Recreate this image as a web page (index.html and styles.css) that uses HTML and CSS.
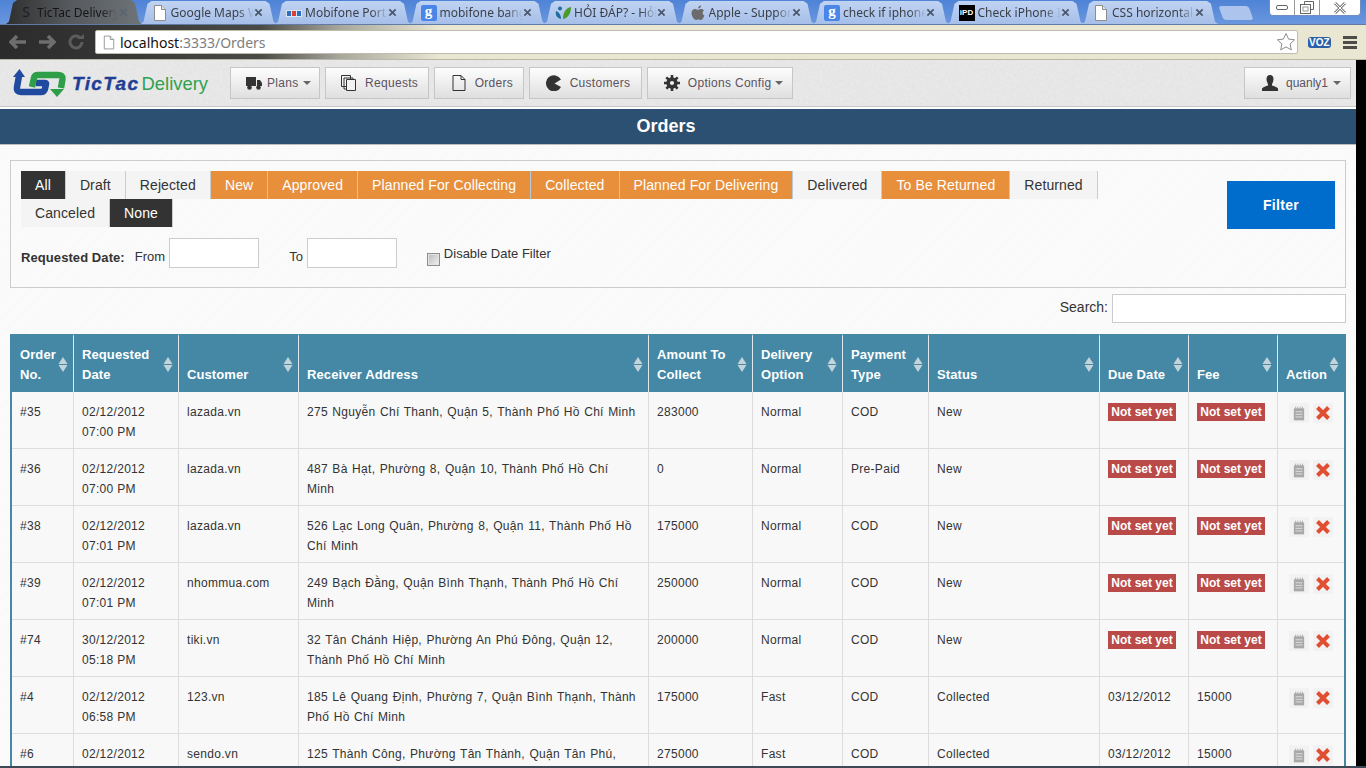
FILE: index.html
```html
<!DOCTYPE html>
<html lang="en">
  <head>
    <meta charset="UTF-8" />
    <meta name="viewport" content="width=device-width, initial-scale=1.0" />
    <title>Orders</title>
    <link rel="stylesheet" href="styles.css">
  </head>
  <body>
    <svg class="defs" width="0" height="0">
      <symbol id="doc" viewBox="0 0 14 16">
        <path d="M1.5 .5h7l4 4v11h-11z" fill="#fff" stroke="#8d8d8d"/>
        <path d="M8.5 .5v4h4" fill="#e4e4e4" stroke="#8d8d8d"/>
      </symbol>
      <symbol id="note" viewBox="0 0 14 16">
        <path d="M1 2h12v14H1z" fill="#a8a8a8"/>
        <path d="M3 0v3M5.500 0v3M8.500 0v3M11 0v3" stroke="#a8a8a8"/>
        <path d="M3 6h8M3 9h8M3 12h8" stroke="#e6e6e6"/>
      </symbol>
      <symbol id="cross" viewBox="0 0 16 16">
        <path d="M2.500 2.500l11 11M13.500 2.500l-11 11" stroke="#e04f32" stroke-width="4"/>
      </symbol>
      <symbol id="close" viewBox="0 0 10 10">
        <path d="M1.500 1.500l7 7M8.500 1.500l-7 7" stroke="#4c5a6e" stroke-width="2"/>
      </symbol>
      <symbol id="updown" viewBox="0 0 10 15">
        <path d="M5 0l4.500 7h-9zM5 15l4.500-7h-9z" fill="#c3d3da"/>
      </symbol>
    </svg>

    <div class="browser">
      <div class="tabstrip">
        <div class="tab tab-active">
          <span class="favicon fav-s">S</span>
          <span class="tab-title">TicTac Delivery</span>
          <svg class="tab-close"><use href="#close"/></svg>
        </div>
        <div class="tab">
          <svg class="favicon"><use href="#doc"/></svg>
          <span class="tab-title">Google Maps Web</span>
          <svg class="tab-close"><use href="#close"/></svg>
        </div>
        <div class="tab">
          <svg class="favicon" viewBox="0 0 16 16">
            <path d="M0 5h16v7H0z" fill="#d9e6f4"/>
            <path d="M1 6h4v5H1z" fill="#2f6fc0"/>
            <path d="M6 6h4v5H6z" fill="#d8413a"/>
            <path d="M11 6h4v5h-4z" fill="#2f6fc0"/>
          </svg>
          <span class="tab-title">Mobifone Portal</span>
          <svg class="tab-close"><use href="#close"/></svg>
        </div>
        <div class="tab">
          <span class="favicon fav-g">g</span>
          <span class="tab-title">mobifone bang gia</span>
          <svg class="tab-close"><use href="#close"/></svg>
        </div>
        <div class="tab">
          <svg class="favicon" viewBox="0 0 16 16">
            <path d="M8 14C8 7 11 3 16 2c0 7-3 11-8 12z" fill="#4c9a2a"/>
            <path d="M6 14C2 13 0 10 1 6c3 1 5 4 5 8z" fill="#1f6f9e"/>
            <circle cx="5" cy="3.500" r="2" fill="#1f6f9e"/>
          </svg>
          <span class="tab-title">HỎI ĐÁP? - Hỏi đáp</span>
          <svg class="tab-close"><use href="#close"/></svg>
        </div>
        <div class="tab">
          <svg class="favicon" viewBox="0 0 16 16">
            <path d="M11 4c1.500 0 2.500.7 3 1.500-2 1.200-1.700 4 .4 4.800C13.600 12.500 12.300 15 11 15c-1 0-1.500-.6-2.700-.6S7 15 6 15c-2 0-4.500-4-4.500-7 0-2.800 1.800-4 3.500-4 1.200 0 2.200.8 3 .8S9.800 4 11 4z" fill="#6b6b6b"/>
            <path d="M8 3.600C8 2 9.300.6 11 .5c.1 1.700-1.300 3.200-3 3.100z" fill="#6b6b6b"/>
          </svg>
          <span class="tab-title">Apple - Support</span>
          <svg class="tab-close"><use href="#close"/></svg>
        </div>
        <div class="tab">
          <span class="favicon fav-g">g</span>
          <span class="tab-title">check if iphone</span>
          <svg class="tab-close"><use href="#close"/></svg>
        </div>
        <div class="tab">
          <span class="favicon fav-ipd">iPD</span>
          <span class="tab-title">Check iPhone IMEI</span>
          <svg class="tab-close"><use href="#close"/></svg>
        </div>
        <div class="tab">
          <svg class="favicon"><use href="#doc"/></svg>
          <span class="tab-title">CSS horizontal menu</span>
          <svg class="tab-close"><use href="#close"/></svg>
        </div>
        <div class="newtab"></div>
        <div class="winctl">
          <span class="winbtn">
            <svg width="12" height="6" viewBox="0 0 12 6"><rect x=".5" y=".5" width="11" height="4" rx="1.500" fill="#fff" stroke="#666"/></svg>
          </span>
          <span class="winbtn">
            <svg width="14" height="13" viewBox="0 0 14 13"><path d="M4.500 3V.5h9v8H11" fill="none" stroke="#666"/><rect x=".5" y="3.500" width="10" height="9" fill="none" stroke="#666"/><rect x="3" y="6" width="5" height="4" fill="none" stroke="#999"/></svg>
          </span>
          <span class="winbtn winbtn-close">
            <svg width="14" height="12" viewBox="0 0 14 12"><path d="M2 1l10 10M12 1L2 11" stroke="#888" stroke-width="3"/><path d="M2 1l10 10M12 1L2 11" stroke="#fff" stroke-width="1"/></svg>
          </span>
        </div>
      </div>
      <div class="toolbar">
        <svg class="toolicon" viewBox="0 0 18 14"><path d="M8 1L2 7l6 6M2 7h15" fill="none" stroke="#6e6e6e" stroke-width="3.500"/></svg>
        <svg class="toolicon" viewBox="0 0 18 14"><path d="M10 1l6 6-6 6M16 7H1" fill="none" stroke="#6e6e6e" stroke-width="3.500"/></svg>
        <svg class="toolicon" viewBox="0 0 18 16"><path d="M15 8a6 6 0 1 1-2-4.500" fill="none" stroke="#5c5c5c" stroke-width="3"/><path d="M10 5h7V0z" fill="#5c5c5c"/></svg>
        <div class="omnibox">
          <svg class="omni-doc"><use href="#doc"/></svg>
          <span class="url">localhost<span class="url-rest">:3333/Orders</span></span>
          <svg class="star" viewBox="0 0 20 20"><path d="M10 1.500l2.600 5.600 6 .7-4.500 4.100 1.200 6-5.300-3-5.300 3 1.200-6L1.400 7.800l6-.7z" fill="#fff" stroke="#8c8c8c"/></svg>
        </div>
        <span class="voz">VOZ</span>
        <span class="burger"><i></i><i></i><i></i></span>
      </div>
    </div>

    <div class="page">
      <div class="content">
        <nav class="topnav">
          <a class="logo" href="#">
            <svg class="logo-mark" viewBox="0 0 60 32">
              <path d="M9 9L7 20q-1 5 4 5h20q3 0 4-3l1-5q.5-1-1-1H26" fill="none" stroke="#1f4aa0" stroke-width="6.500"/>
              <path d="M9.500 2L15 10H3z" fill="#1f4aa0"/>
              <path d="M22 20l2-9q.5-3 4-3h20q5 0 4.500 4L51 21" fill="none" stroke="#2f9e49" stroke-width="6.500"/>
              <path d="M47 30l-7-8h14z" fill="#2f9e49"/>
            </svg>
            <span class="logo-tic">TicTac</span><span class="logo-del">Delivery</span>
          </a>
          <div class="navbtns">
            <a class="navbtn navbtn-plans" href="#">
              <svg class="navicon" viewBox="0 0 16 14"><path d="M0 1h10v9H0zM11 4h3l2 3v3h-5z" fill="#333"/><circle cx="3.500" cy="11.500" r="2.300" fill="#333"/><circle cx="12.500" cy="11.500" r="2.300" fill="#333"/></svg>
              Plans<span class="caret"></span>
            </a>
            <a class="navbtn" href="#">
              <svg class="navicon" viewBox="0 0 16 16"><path d="M.5.500h9v11h-9zM3 3h9v11H3z" fill="#f2f2f2" stroke="#333"/><path d="M5.500 4.500h9v11h-9z" fill="#f2f2f2" stroke="#333"/></svg>
              Requests
            </a>
            <a class="navbtn" href="#">
              <svg class="navicon" viewBox="0 0 14 16"><path d="M1 .5h8l4 4v11H1zM9 .5v4h4" fill="none" stroke="#333"/></svg>
              Orders
            </a>
            <a class="navbtn navbtn-cust" href="#">
              <svg class="navicon" viewBox="0 0 16 16"><path d="M15 4.500A8 8 0 1 0 15 12L8.500 8.500z" fill="#333"/></svg>
              Customers
            </a>
            <a class="navbtn navbtn-opts" href="#">
              <svg class="navicon" viewBox="0 0 16 16"><circle cx="8" cy="8" r="3.900" fill="none" stroke="#333" stroke-width="3.600"/><path d="M8 0v16M0 8h16M2.300 2.300l11.400 11.400M13.700 2.300L2.300 13.700" stroke="#333" stroke-width="2.600" stroke-dasharray="3 10 3 0"/></svg>
              Options Config<span class="caret"></span>
            </a>
          </div>
          <a class="navbtn navbtn-user" href="#">
            <svg class="navicon" viewBox="0 0 16 16"><path d="M8 0c2.500 0 3.500 2 3.500 4S10.500 8.500 10 9v1.500c2 .8 5 1.500 6 3V16H0v-2.500c1-1.500 4-2.200 6-3V9c-.5-.5-1.500-3-1.500-5S5.500 0 8 0z" fill="#333"/></svg>
            quanly1<span class="caret"></span>
          </a>
        </nav>

        <h1 class="pagetitle">Orders</h1>

        <main class="main">
          <section class="filterbox">
            <div class="filterleft">
              <ul class="statuses">
                <li class="st st-dark">All</li>
                <li class="st">Draft</li>
                <li class="st">Rejected</li>
                <li class="st st-on">New</li>
                <li class="st st-on">Approved</li>
                <li class="st st-on">Planned For Collecting</li>
                <li class="st st-on">Collected</li>
                <li class="st st-on">Planned For Delivering</li>
                <li class="st">Delivered</li>
                <li class="st st-on">To Be Returned</li>
                <li class="st">Returned</li>
                <li class="st">Canceled</li>
                <li class="st st-dark">None</li>
              </ul>
              <div class="daterow">
                <b class="datelabel">Requested Date:</b>
                <label class="from">From</label>
                <input class="dateinput" type="text" />
                <label class="to">To</label>
                <input class="dateinput" type="text" />
                <input class="disablebox" type="checkbox" />
                <span class="disabletext">Disable Date Filter</span>
              </div>
            </div>
            <button class="filterbtn">Filter</button>
          </section>

          <div class="searchrow">
            <label class="searchlabel">Search:</label>
            <input class="searchinput" type="text" />
          </div>

          <table class="orders">
            <colgroup>
              <col class="c1"><col class="c2"><col class="c3"><col class="c4"><col class="c5"><col class="c6">
              <col class="c7"><col class="c8"><col class="c9"><col class="c10"><col class="c11">
            </colgroup>
            <thead>
              <tr>
                <th>Order<br>No.<svg class="sort"><use href="#updown"/></svg></th>
                <th>Requested<br>Date<svg class="sort"><use href="#updown"/></svg></th>
                <th>Customer<svg class="sort"><use href="#updown"/></svg></th>
                <th>Receiver Address<svg class="sort"><use href="#updown"/></svg></th>
                <th>Amount To<br>Collect<svg class="sort"><use href="#updown"/></svg></th>
                <th>Delivery<br>Option<svg class="sort"><use href="#updown"/></svg></th>
                <th>Payment<br>Type<svg class="sort"><use href="#updown"/></svg></th>
                <th>Status<svg class="sort"><use href="#updown"/></svg></th>
                <th>Due Date<svg class="sort"><use href="#updown"/></svg></th>
                <th>Fee<svg class="sort"><use href="#updown"/></svg></th>
                <th>Action<svg class="sort"><use href="#updown"/></svg></th>
              </tr>
            </thead>
            <tbody>
              <tr>
                <td>#35</td><td>02/12/2012<br>07:00 PM</td><td>lazada.vn</td>
                <td class="addr">275 Nguyễn Chí Thanh, Quận 5, Thành Phố Hồ Chí Minh</td>
                <td>283000</td><td>Normal</td><td>COD</td><td>New</td>
                <td><span class="notset">Not set yet</span></td><td><span class="notset">Not set yet</span></td>
                <td><div class="actions"><span class="act"><svg class="ic-note"><use href="#note"/></svg></span><span class="act"><svg class="ic-x"><use href="#cross"/></svg></span></div></td>
              </tr>
              <tr>
                <td>#36</td><td>02/12/2012<br>07:00 PM</td><td>lazada.vn</td>
                <td class="addr">487 Bà Hạt, Phường 8, Quận 10, Thành Phố Hồ Chí Minh</td>
                <td>0</td><td>Normal</td><td>Pre-Paid</td><td>New</td>
                <td><span class="notset">Not set yet</span></td><td><span class="notset">Not set yet</span></td>
                <td><div class="actions"><span class="act"><svg class="ic-note"><use href="#note"/></svg></span><span class="act"><svg class="ic-x"><use href="#cross"/></svg></span></div></td>
              </tr>
              <tr>
                <td>#38</td><td>02/12/2012<br>07:01 PM</td><td>lazada.vn</td>
                <td class="addr">526 Lạc Long Quân, Phường 8, Quận 11, Thành Phố Hồ Chí Minh</td>
                <td>175000</td><td>Normal</td><td>COD</td><td>New</td>
                <td><span class="notset">Not set yet</span></td><td><span class="notset">Not set yet</span></td>
                <td><div class="actions"><span class="act"><svg class="ic-note"><use href="#note"/></svg></span><span class="act"><svg class="ic-x"><use href="#cross"/></svg></span></div></td>
              </tr>
              <tr>
                <td>#39</td><td>02/12/2012<br>07:01 PM</td><td>nhommua.com</td>
                <td class="addr">249 Bạch Đằng, Quận Bình Thạnh, Thành Phố Hồ Chí Minh</td>
                <td>250000</td><td>Normal</td><td>COD</td><td>New</td>
                <td><span class="notset">Not set yet</span></td><td><span class="notset">Not set yet</span></td>
                <td><div class="actions"><span class="act"><svg class="ic-note"><use href="#note"/></svg></span><span class="act"><svg class="ic-x"><use href="#cross"/></svg></span></div></td>
              </tr>
              <tr>
                <td>#74</td><td>30/12/2012<br>05:18 PM</td><td>tiki.vn</td>
                <td class="addr">32 Tân Chánh Hiệp, Phường An Phú Đông, Quận 12, Thành Phố Hồ Chí Minh</td>
                <td>200000</td><td>Normal</td><td>COD</td><td>New</td>
                <td><span class="notset">Not set yet</span></td><td><span class="notset">Not set yet</span></td>
                <td><div class="actions"><span class="act"><svg class="ic-note"><use href="#note"/></svg></span><span class="act"><svg class="ic-x"><use href="#cross"/></svg></span></div></td>
              </tr>
              <tr>
                <td>#4</td><td>02/12/2012<br>06:58 PM</td><td>123.vn</td>
                <td class="addr">185 Lê Quang Định, Phường 7, Quận Bình Thạnh, Thành Phố Hồ Chí Minh</td>
                <td>175000</td><td>Fast</td><td>COD</td><td>Collected</td>
                <td>03/12/2012</td><td>15000</td>
                <td><div class="actions"><span class="act"><svg class="ic-note"><use href="#note"/></svg></span><span class="act"><svg class="ic-x"><use href="#cross"/></svg></span></div></td>
              </tr>
              <tr>
                <td>#6</td><td>02/12/2012<br>06:58 PM</td><td>sendo.vn</td>
                <td class="addr">125 Thành Công, Phường Tân Thành, Quận Tân Phú, Thành Phố Hồ Chí Minh</td>
                <td>275000</td><td>Fast</td><td>COD</td><td>Collected</td>
                <td>03/12/2012</td><td>15000</td>
                <td><div class="actions"><span class="act"><svg class="ic-note"><use href="#note"/></svg></span><span class="act"><svg class="ic-x"><use href="#cross"/></svg></span></div></td>
              </tr>
            </tbody>
          </table>
        </main>
      </div>
      <div class="scrollgap"></div>
    </div>
    <div class="taskbar"></div>
  </body>
</html>
```

FILE: styles.css
```css
* {
  box-sizing: border-box;
}

html,
body {
  height: 768px;
  overflow: hidden;
}

body {
  margin: 0;
  padding: 0;
  display: flex;
  flex-direction: column;
  font-family: "Liberation Sans", Arial, sans-serif;
  font-size: 13px;
  color: #333;
  background: #000;
}

a {
  color: inherit;
  text-decoration: none;
}

.defs {
  display: block;
  height: 0;
}

/* browser window */
.browser {
  flex: 0 0 60px;
}

.tabstrip {
  height: 25px;
  display: flex;
  align-items: flex-end;
  padding-left: 6px;
  background: linear-gradient(#4f83d6, #6a97de);
  border-bottom: 1px solid #5f7ba6;
}

.tab {
  flex: 0 0 136px;
  height: 23px;
  margin-right: -1.5px;
  display: flex;
  align-items: center;
  padding-left: 13px;
  background: linear-gradient(#c0d3f2, #a6bfe9);
  clip-path: polygon(0 100%, 3px 90%, 7px 12%, 11px 0, calc(100% - 11px) 0, calc(100% - 7px) 12%, calc(100% - 3px) 90%, 100% 100%);
  color: #3b3f47;
  font-family: "Noto Sans", sans-serif;
  font-size: 12px;
}

.tab-active {
  height: 24px;
  padding-left: 14px;
  background: linear-gradient(90deg, #2f2f2f, #55585c 45%, #6e7478);
  color: #151515;
}

.favicon {
  flex: 0 0 16px;
  width: 16px;
  height: 16px;
  margin: 0 3px 0 -2px;
  display: block;
}

.fav-s {
  font-size: 14px;
  line-height: 16px;
  text-align: center;
  color: #1e1e1e;
}

.fav-g {
  background: #4a86e8;
  border-radius: 2px;
  color: #fff;
  font-family: "Liberation Serif", serif;
  font-weight: bold;
  font-size: 15px;
  line-height: 13px;
  text-align: center;
}

.fav-ipd {
  background: #000;
  color: #fff;
  font-family: "Liberation Sans", sans-serif;
  font-weight: bold;
  font-size: 8px;
  line-height: 16px;
  text-align: center;
}

.tab-title {
  width: 83px;
  white-space: nowrap;
  overflow: hidden;
  -webkit-mask-image: linear-gradient(90deg, #000 80%, transparent);
  mask-image: linear-gradient(90deg, #000 80%, transparent);
}

.tab-active .tab-title {
  width: 80px;
}

.tab-close {
  width: 9px;
  height: 9px;
}

.tab-active .tab-close {
  margin-left: 2px;
  opacity: 0.45;
}

.newtab {
  width: 30px;
  height: 14px;
  margin: 0 0 4px 4px;
  background: #adc5ec;
  border-radius: 3px;
  transform: skewX(20deg);
}

.winctl {
  margin: 0 5px auto auto;
  height: 16px;
  width: 92px;
  display: flex;
  background: #fff;
  border-radius: 0 0 4px 4px;
  border: 1px solid #6f8fc0;
  border-top: none;
}

.winbtn {
  flex: 0 0 25px;
  display: flex;
  align-items: center;
  justify-content: center;
  border-right: 1px solid #9a9a9a;
}

.winbtn-close {
  flex: 1;
  border-right: none;
}

.toolbar {
  height: 35px;
  display: flex;
  align-items: center;
  padding-left: 9px;
  background: linear-gradient(90deg, #2b2b2b, #333 90px, #4a4a45 260px, #a8a79c 340px, #e9e6d2 440px);
  border-bottom: 1px solid #b9b7a8;
}

.toolicon {
  flex: 0 0 18px;
  width: 18px;
  height: 16px;
  margin-right: 11px;
}

.omnibox {
  flex: 0 0 1203px;
  height: 24px;
  margin-left: -1px;
  display: flex;
  align-items: center;
  padding-left: 7px;
  background: #fff;
  border: 1px solid #bdbcae;
  border-radius: 2px;
}

.omni-doc {
  width: 12px;
  height: 15px;
}

.url {
  margin-left: 5px;
  font-family: "Noto Sans", sans-serif;
  font-size: 14px;
  color: #111;
}

.url-rest {
  color: #7d7d7d;
}

.star {
  width: 20px;
  height: 20px;
  margin-left: auto;
  margin-right: 1px;
}

.voz {
  margin-left: 10px;
  padding: 0 1px;
  background: #2b5fa8;
  border-radius: 3px;
  color: #fff;
  font-weight: bold;
  font-size: 10px;
  line-height: 11px;
}

.burger {
  margin-left: 12px;
  width: 14px;
  display: flex;
  flex-direction: column;
  gap: 2px;
}

.burger i {
  height: 3px;
  background: #4c4c48;
}

/* page */
.page {
  flex: 1;
  min-height: 0;
  display: flex;
}

.content {
  flex: 0 0 1356px;
  min-width: 0;
  overflow: hidden;
  background-color: #fbfbfb;
  background-image: repeating-linear-gradient(135deg, rgba(0, 0, 0, 0.012) 0 1px, transparent 1px 3px);
}

.scrollgap {
  flex: 1;
  background: #000;
}

.taskbar {
  flex: 0 0 2px;
  background: #3d4a55;
}

.topnav {
  height: 49px;
  display: flex;
  align-items: flex-start;
  padding: 7px 5px 0 11px;
  background-color: #e9e9e9;
  background-image: url("data:image/svg+xml,%3Csvg xmlns='http://www.w3.org/2000/svg' width='300' height='60'%3E%3Cfilter id='n'%3E%3CfeTurbulence type='fractalNoise' baseFrequency='.35' numOctaves='2'/%3E%3CfeColorMatrix values='0 0 0 0 .5 0 0 0 0 .5 0 0 0 0 .5 .2 0 0 0 -.05'/%3E%3C/filter%3E%3Crect width='300' height='60' filter='url(%23n)'/%3E%3C/svg%3E");
  border-bottom: 2px solid #fff;
  box-shadow: inset 0 -1px 0 #c8c8c8;
}

.logo {
  flex: 0 0 219px;
  display: flex;
  align-items: center;
  height: 34px;
  font-size: 19px;
  white-space: nowrap;
}

.logo-mark {
  flex: 0 0 60px;
  width: 60px;
  height: 32px;
  margin: -2px 0 0 -1px;
}

.logo-tic {
  margin-left: 2px;
  font-weight: bold;
  font-style: italic;
  letter-spacing: 1.4px;
  color: #1f3f94;
  -webkit-text-stroke: 0.4px #1f3f94;
}

.logo-del {
  margin-left: 2px;
  font-size: 18.400px;
  color: #2fa14f;
}

.navbtns {
  display: flex;
  gap: 5px;
}

.navbtn {
  height: 32px;
  display: flex;
  align-items: center;
  padding: 0 10px 0 15.500px;
  background: linear-gradient(#fdfdfd, #dfdfdf);
  border: 1px solid #c6c6c6;
  font-size: 12px;
  letter-spacing: 0.3px;
  color: #5a5260;
  white-space: nowrap;
}

.navbtn-plans {
  padding: 0 8px 0 15px;
}

.navbtn-plans .navicon {
  margin-right: 5px;
}

.navbtn-cust {
  padding-right: 11px;
}

.navbtn-opts {
  padding-right: 9px;
}

.navbtn-user {
  margin-left: auto;
  padding: 0 9px 0 17px;
  letter-spacing: 0;
}

.navbtn-user .caret {
  margin-left: 5px;
}

.navicon {
  width: 16px;
  height: 16px;
  margin-right: 8px;
}

.caret {
  width: 0;
  height: 0;
  margin-left: 4px;
  border-left: 4px solid transparent;
  border-right: 4px solid transparent;
  border-top: 4px solid #666;
}

.pagetitle {
  margin: 0;
  height: 36px;
  padding-right: 24px;
  background: #2c5072;
  border-bottom: 1px solid #bdbdbd;
  color: #fff;
  font-size: 18px;
  line-height: 35px;
  text-align: center;
}

.main {
  padding: 15px 10px 0;
}

/* filter box */
.filterbox {
  height: 128px;
  display: flex;
  justify-content: space-between;
  padding: 10px 10px 0;
  border: 1px solid #ccc;
}

.filterleft {
  flex: 0 0 1090px;
}

.statuses {
  margin: 0;
  padding: 0;
  list-style: none;
  display: flex;
  flex-wrap: wrap;
}

.st {
  height: 28px;
  padding: 0 14px;
  background: #f4f4f4;
  border-right: 1px solid #ccc;
  font-size: 14px;
  letter-spacing: 0.11px;
  line-height: 28px;
  color: #333;
}

.st-dark {
  background: #333;
  border-right-color: #ccc;
  color: #fff;
}

.st-on {
  background: #e88f3c;
  border-right-color: #b9cad6;
  color: #fff;
}

.daterow {
  display: flex;
  align-items: center;
  height: 30px;
  margin-top: 11px;
}

.datelabel {
  font-size: 13px;
  letter-spacing: 0.08px;
  margin-top: 8px;
}

.from {
  margin: 6px 4px 0 10px;
  font-size: 13px;
}

.to {
  margin: 6px 4px 0 30px;
  font-size: 13px;
}

.dateinput {
  width: 90px;
  height: 30px;
  border: 1px solid #ccc;
  background: #fff;
}

.disablebox {
  appearance: none;
  width: 13px;
  height: 13px;
  margin: 12px 4px 0 30px;
  border: 1px solid #8e8e8e;
  background: linear-gradient(135deg, #b9b9b9, #f2f2f2);
  box-shadow: inset 0 0 0 1px #e4e4e4;
}

.disabletext {
  margin-top: 1px;
  font-size: 13px;
}

.filterbtn {
  width: 108px;
  height: 48px;
  margin: 10px 0 0;
  border: none;
  background: #006dcc;
  color: #fff;
  font-family: inherit;
  font-weight: bold;
  font-size: 14px;
  letter-spacing: 0.3px;
}

.searchrow {
  display: flex;
  justify-content: flex-end;
  align-items: center;
  gap: 4px;
  height: 29px;
  margin-top: 6px;
  font-size: 14px;
}

.searchlabel {
  margin-top: -3px;
}

.searchinput {
  width: 234px;
  height: 29px;
  border: 1px solid #ccc;
  background: #fff;
}

/* orders table */
.orders {
  margin-top: 11px;
  width: 1336px;
  table-layout: fixed;
  border-collapse: separate;
  border-spacing: 0;
  border-left: 2px solid #4488a6;
  border-right: 2px solid #4488a6;
}

.c1 { width: 62px; }
.c2 { width: 105px; }
.c3 { width: 120px; }
.c4 { width: 350px; }
.c5 { width: 104px; }
.c6 { width: 90px; }
.c7 { width: 86px; }
.c8 { width: 171px; }
.c9 { width: 89px; }
.c10 { width: 89px; }
.c11 { width: 66px; }

.orders th {
  position: relative;
  height: 58px;
  padding: 0 8px 7px;
  background: #4488a6;
  background-clip: padding-box;
  border-top: 2px solid #4488a6;
  border-right: 1px solid #dfe8ec;
  color: #fff;
  font-size: 13px;
  letter-spacing: 0.1px;
  line-height: 20px;
  text-align: left;
  vertical-align: bottom;
}

.orders th:last-child {
  border-right: none;
}

.sort {
  position: absolute;
  top: 21px;
  right: 5px;
  width: 10px;
  height: 15px;
}

.orders td {
  height: 57px;
  padding: 10px 8px 6px;
  background: #f8f8f8;
  border-right: 1px solid #ddd;
  border-bottom: 1px solid #ddd;
  font-size: 12px;
  letter-spacing: 0.3px;
  line-height: 20px;
  vertical-align: top;
}

.orders td:last-child {
  border-right: none;
}

.orders td.addr {
  padding-right: 11px;
  word-spacing: 0.8px;
}

.notset {
  display: block;
  width: 68px;
  height: 18px;
  margin-top: 1px;
  background: #b94a48;
  color: #fff;
  font-weight: bold;
  font-size: 12px;
  letter-spacing: 0;
  line-height: 18px;
  text-align: center;
  white-space: nowrap;
}

.actions {
  display: flex;
  gap: 4px;
  margin: 1px 0 0 3px;
}

.act {
  width: 20px;
  height: 20px;
  display: flex;
  align-items: center;
  justify-content: center;
  background: #f2f2f2;
}

.ic-note {
  width: 12px;
  height: 15px;
}

.ic-x {
  width: 16px;
  height: 16px;
}
```
